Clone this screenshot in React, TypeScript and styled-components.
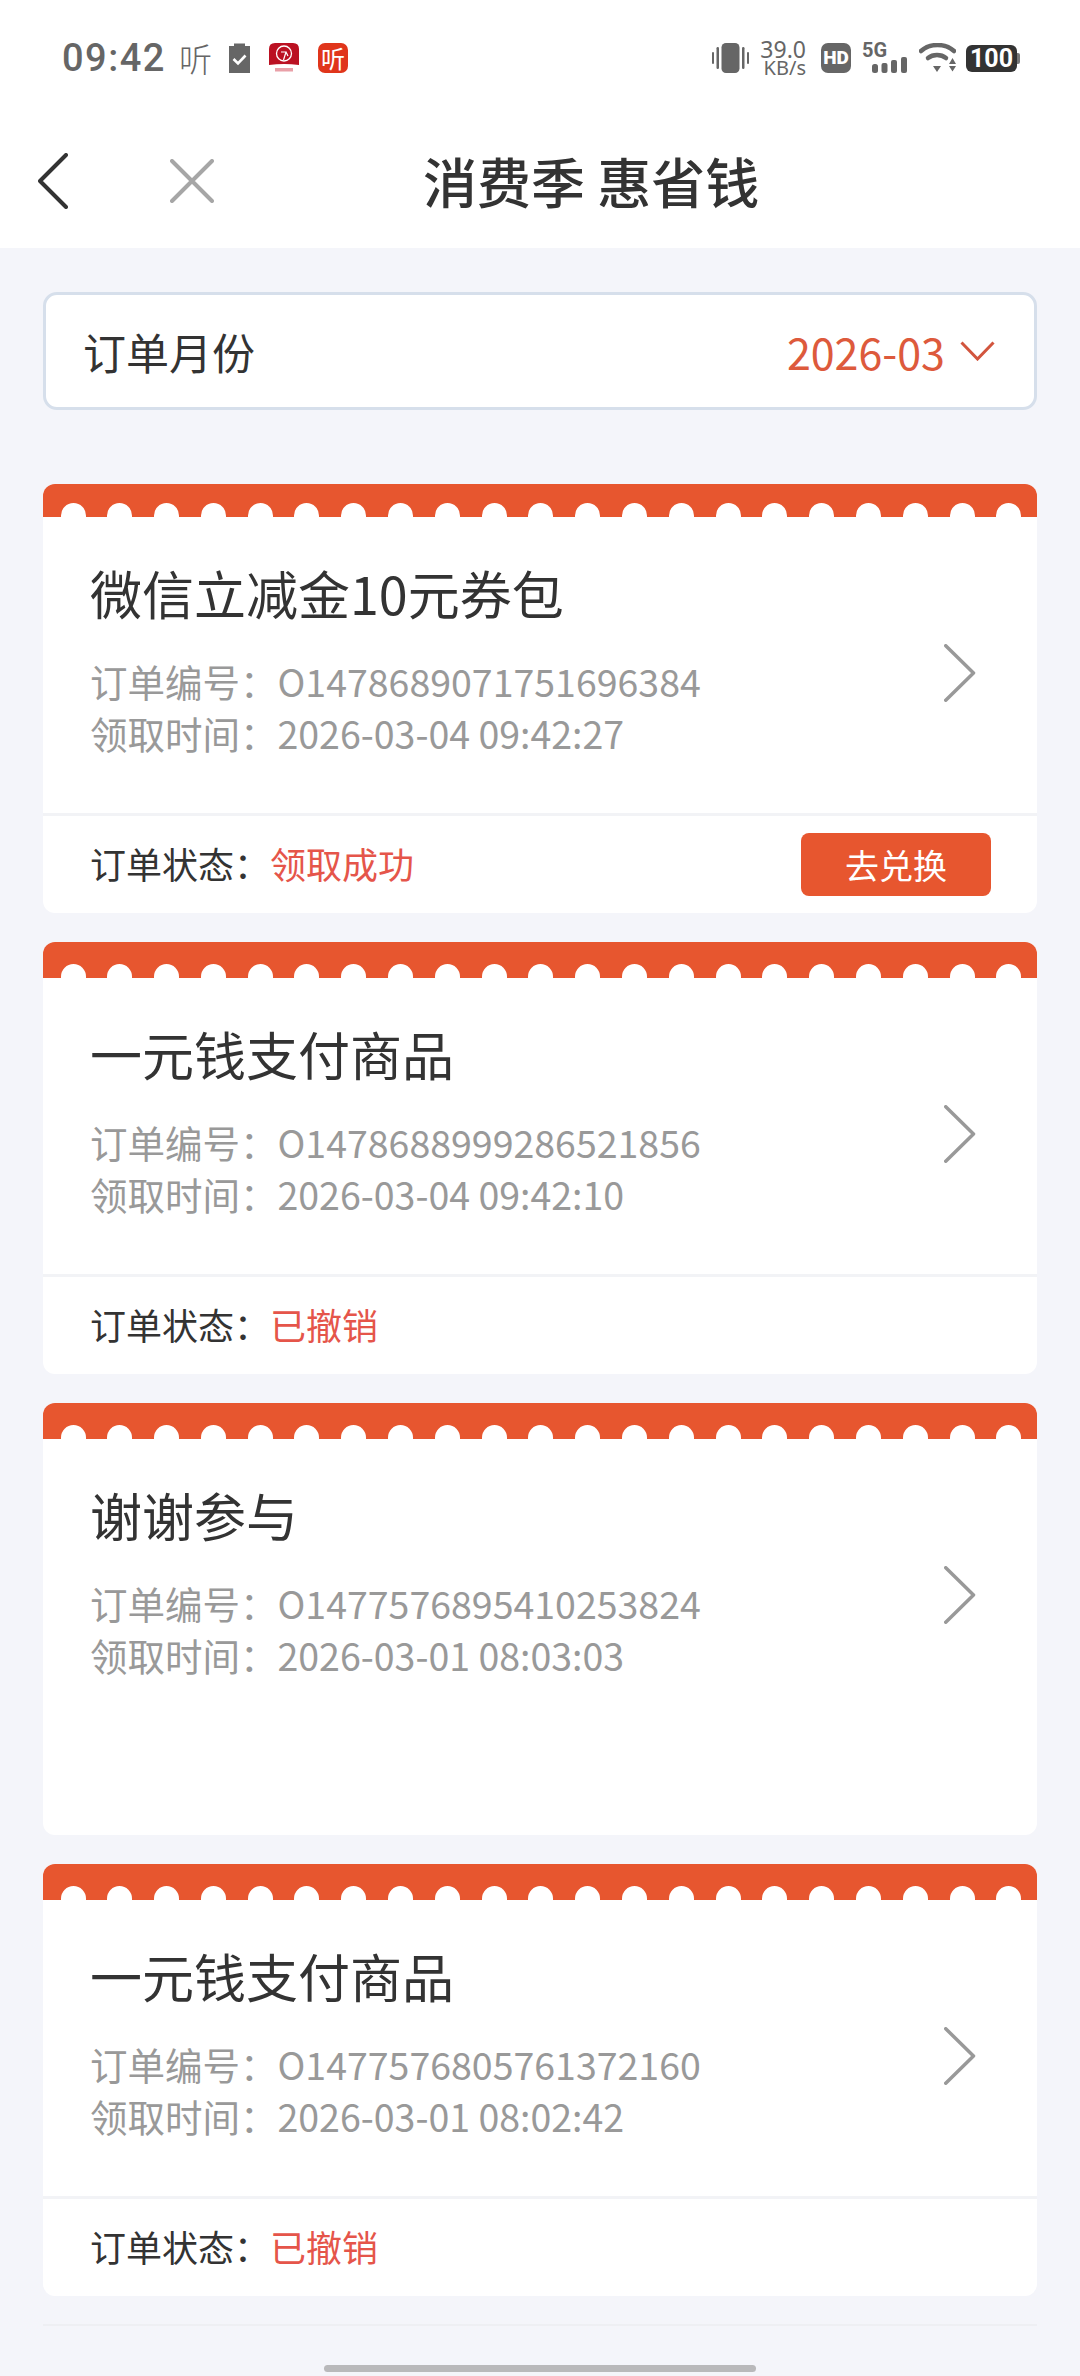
import React from 'react';
import styled, { createGlobalStyle } from 'styled-components';

const GlobalStyle = createGlobalStyle`
  html, body {
    margin: 0;
    padding: 0;
    background: #f4f5fa;
    font-family: "Noto Sans CJK SC", "Noto Sans", sans-serif;
  }
  * {
    box-sizing: border-box;
  }
`;

const Page = styled.div`
  width: 1080px;
  height: 2376px;
  overflow: hidden;
  background: #f4f5fa;
  display: flex;
  flex-direction: column;
`;

const Header = styled.header`
  background: #fff;
  height: 248px;
  flex-shrink: 0;
`;

const StatusBar = styled.div`
  height: 116px;
  padding: 0 60px 0 62px;
  display: flex;
  align-items: center;
  justify-content: space-between;
`;

const StatusGroup = styled.div<{ $gap: number }>`
  display: flex;
  align-items: center;
  gap: ${({ $gap }) => $gap}px;
`;

const Time = styled.span`
  margin-right: -6px;
  font-family: Roboto, sans-serif;
  font-size: 38px;
  font-weight: 500;
  letter-spacing: 1.5px;
  color: #666;
  line-height: 30px;
`;

const ListenGlyph = styled.span`
  margin-right: -2px;
  font-size: 33px;
  font-weight: 300;
  line-height: 30px;
  color: #666;
`;

const ListenApp = styled.span`
  width: 30px;
  height: 30px;
  border-radius: 7px;
  background: #e0351b;
  color: #fff;
  font-size: 24px;
  line-height: 30px;
  text-align: center;
`;

const Speed = styled.div`
  width: 45px;
  margin-right: 3px;
  display: flex;
  flex-direction: column;
  align-items: flex-end;
  color: #666;
  font-family: "Noto Sans", sans-serif;
`;

const SpeedValue = styled.span`
  font-size: 23px;
  line-height: 19px;
`;

const SpeedUnit = styled.span`
  font-size: 20px;
  line-height: 18px;
  white-space: nowrap;
`;

const HdBadge = styled.span`
  width: 30px;
  height: 30px;
  margin-right: -1px;
  border-radius: 7px;
  background: #666;
  color: #fff;
  font-family: Roboto, sans-serif;
  font-size: 19px;
  font-weight: 900;
  line-height: 30px;
  text-align: center;
`;

const Signal = styled.div`
  width: 45px;
  height: 30px;
  display: flex;
  flex-direction: column;
  justify-content: space-between;
`;

const SignalLabel = styled.span`
  font-family: Roboto, sans-serif;
  font-size: 20px;
  font-weight: 700;
  line-height: 15px;
  color: #666;
`;

const SignalBars = styled.svg`
  align-self: flex-end;
  margin-top: -2px;
`;

const WifiSvg = styled.svg`
  margin-right: -2px;
`;

const Battery = styled.span`
  position: relative;
  width: 51px;
  height: 27px;
  margin-right: 3px;
  border-radius: 6px;
  background: #333;
  color: #fff;
  font-family: Roboto, sans-serif;
  font-size: 25px;
  font-weight: 700;
  line-height: 27px;
  text-align: center;

  &::after {
    content: '';
    position: absolute;
    right: -3px;
    top: 8px;
    width: 3px;
    height: 11px;
    border-radius: 0 2px 2px 0;
    background: #777;
  }
`;

const NavBar = styled.nav`
  height: 132px;
  display: flex;
  align-items: center;
  padding: 0 0 2px 38px;
`;

const CloseWrap = styled.span`
  display: flex;
  margin-left: 102px;
`;

const NavTitle = styled.h1`
  margin: 0 0 0 209px;
  font-size: 54px;
  font-weight: 500;
  color: #333;
  line-height: 60px;
  white-space: nowrap;
`;

const Content = styled.main`
  padding: 44px 43px 0;
`;

const MonthSelect = styled.div`
  height: 118px;
  padding: 0 39px 0 37px;
  background: #fff;
  border: 3px solid #d6dfeb;
  border-radius: 14px;
  display: flex;
  align-items: center;
  justify-content: space-between;
  margin-bottom: 74px;
`;

const MonthLabel = styled.span`
  font-size: 43px;
  color: #333;
`;

const MonthValue = styled.span`
  display: flex;
  align-items: center;
  gap: 15px;
  font-size: 43px;
  color: #dd5a3c;
`;

const CardList = styled.div`
  display: flex;
  flex-direction: column;
  gap: 29px;
`;

const Card = styled.article`
  background: #fff;
  border-radius: 12px;
  overflow: hidden;
`;

const Band = styled.div<{ $height: number }>`
  height: ${({ $height }) => $height}px;
  background: #e7562f;
  display: flex;
  align-items: flex-end;
  gap: 21.8px;
  padding-left: 17.5px;
  overflow: hidden;
`;

const Scallop = styled.span`
  flex: 0 0 25px;
  height: 14px;
  background: #fff;
  border-radius: 12.5px 12.5px 0 0;
`;

const CardBody = styled.div`
  height: 296px;
  padding: 16px 60px 0 47px;
  display: flex;
  align-items: center;
  justify-content: space-between;
`;

const CardInfo = styled.div`
  display: flex;
  flex-direction: column;
  margin-top: -31px;
`;

const CardTitle = styled.h2`
  margin: 0 0 26px;
  font-size: 52px;
  font-weight: 400;
  color: #333;
  line-height: 72px;
`;

const MetaLine = styled.div`
  font-size: 37.5px;
  color: #999;
  line-height: 52px;
  white-space: nowrap;
`;

const CardFooter = styled.div<{ $empty?: boolean }>`
  height: 100px;
  padding: 0 46px 0 47px;
  border-top: 3px solid ${({ $empty }) => ($empty ? '#fff' : '#f2f3f6')};
  display: flex;
  align-items: center;
  justify-content: space-between;
`;

const StatusText = styled.div`
  margin-bottom: 3px;
  font-size: 36px;
  color: #333;
  line-height: 50px;
`;

const StatusValue = styled.span`
  color: #e5554a;
`;

const RedeemButton = styled.button`
  width: 190px;
  height: 63px;
  padding: 0;
  border: none;
  border-radius: 8px;
  background: #e7562f;
  color: #fff;
  font-family: inherit;
  font-size: 34px;
`;

const EndRule = styled.div`
  height: 2px;
  margin-top: 28px;
  background: #eeeff3;
`;

const HomeIndicator = styled.div`
  width: 432px;
  height: 7px;
  margin: 39px auto 0;
  border-radius: 4px;
  background: #b9b9bb;
`;

const Chevron = ({ w, h, color, sw }: { w: number; h: number; color: string; sw: number }) => (
  <svg width={w} height={h} viewBox={`0 0 ${w} ${h}`} fill="none">
    <path
      d={`M${sw / 2} ${sw / 2}L${w - sw} ${h / 2}L${sw / 2} ${h - sw / 2}`}
      stroke={color}
      strokeWidth={sw}
      strokeLinecap="round"
      strokeLinejoin="round"
    />
  </svg>
);

const VibrateIcon = () => (
  <svg width="37" height="30" viewBox="0 0 37 30" fill="#666">
    <rect x="9.500" y="0" width="18" height="30" rx="4.500" />
    <rect x="0" y="9" width="2" height="12" rx="1" />
    <rect x="4.500" y="4" width="2.500" height="22" rx="1.200" />
    <rect x="30" y="4" width="2.500" height="22" rx="1.200" />
    <rect x="35" y="9" width="2" height="12" rx="1" />
  </svg>
);

const WifiIcon = () => (
  <WifiSvg width="37" height="30" viewBox="0 0 37 30" fill="none">
    <path d="M2 8C11 0 26 0 35 8" stroke="#666" strokeWidth="4.500" strokeLinecap="round" />
    <path d="M9 15C14 11 22 11 27 15" stroke="#666" strokeWidth="4.500" strokeLinecap="round" />
    <path d="M14 23H22L18 29Z" fill="#666" />
    <path d="M30 21H37L33.500 15Z M30 23H37L33.500 28.500Z" fill="#666" />
  </WifiSvg>
);

const ClipboardIcon = () => (
  <svg width="21" height="30" viewBox="0 0 21 30">
    <path d="M0 3H5V0.500H16V3H21V30H0Z" fill="#666" />
    <path d="M4.500 16L9 20.500L16.500 12.500" fill="none" stroke="#fff" strokeWidth="2.600" />
  </svg>
);

const RedAppIcon = () => (
  <svg width="30" height="30" viewBox="0 0 30 30">
    <path d="M0 6Q0 0 6 0H24Q30 0 30 6V22Q15 20 0 22Z" fill="#bb1122" />
    <circle cx="15" cy="10.500" r="7.500" fill="none" stroke="#fff" strokeWidth="1.300" />
    <path d="M12 9H17L14.500 17M17 9L19 13" fill="none" stroke="#fff" strokeWidth="1.200" />
    <rect x="6" y="25" width="18" height="3.500" fill="#e9a0a8" />
  </svg>
);

const BackIcon = () => (
  <svg width="30" height="56" viewBox="0 0 30 56" fill="none">
    <path d="M28 2L2 28L28 54" stroke="#333" strokeWidth="4" strokeLinecap="round" strokeLinejoin="round" />
  </svg>
);

const CloseIcon = () => (
  <svg width="44" height="44" viewBox="0 0 44 44" fill="none">
    <path d="M2 2L42 42M42 2L2 42" stroke="#a6a6a6" strokeWidth="4" strokeLinecap="round" />
  </svg>
);

type Order = {
  title: string;
  orderNo: string;
  time: string;
  status?: string;
  redeem?: boolean;
  bandHeight: number;
};

const orders: Order[] = [
  { title: '微信立减金10元券包', orderNo: 'O1478689071751696384', time: '2026-03-04 09:42:27', status: '领取成功', redeem: true, bandHeight: 33 },
  { title: '一元钱支付商品', orderNo: 'O1478688999286521856', time: '2026-03-04 09:42:10', status: '已撤销', bandHeight: 36 },
  { title: '谢谢参与', orderNo: 'O1477576895410253824', time: '2026-03-01 08:03:03', bandHeight: 36 },
  { title: '一元钱支付商品', orderNo: 'O1477576805761372160', time: '2026-03-01 08:02:42', status: '已撤销', bandHeight: 36 },
];

const scallops = Array.from({ length: 21 }, (_, i) => i);

const App: React.FC = () => (
  <Page>
    <GlobalStyle />
    <Header>
      <StatusBar>
        <StatusGroup $gap={19}>
          <Time>09:42</Time>
          <ListenGlyph>听</ListenGlyph>
          <ClipboardIcon />
          <RedAppIcon />
          <ListenApp>听</ListenApp>
        </StatusGroup>
        <StatusGroup $gap={12}>
          <VibrateIcon />
          <Speed>
            <SpeedValue>39.0</SpeedValue>
            <SpeedUnit>KB/s</SpeedUnit>
          </Speed>
          <HdBadge>HD</HdBadge>
          <Signal>
            <SignalLabel>5G</SignalLabel>
            <SignalBars width="35" height="16" viewBox="0 0 35 16" fill="#666">
              <rect x="0" y="7" width="6" height="9" rx="2.500" />
              <rect x="9.500" y="6" width="6" height="10" rx="2" />
              <rect x="19" y="3" width="6" height="13" rx="2" />
              <rect x="29" y="0" width="6" height="16" rx="2" />
            </SignalBars>
          </Signal>
          <WifiIcon />
          <Battery>100</Battery>
        </StatusGroup>
      </StatusBar>
      <NavBar>
        <BackIcon />
        <CloseWrap>
          <CloseIcon />
        </CloseWrap>
        <NavTitle>消费季 惠省钱</NavTitle>
      </NavBar>
    </Header>
    <Content>
      <MonthSelect>
        <MonthLabel>订单月份</MonthLabel>
        <MonthValue>
          2026-03
          <svg width="35" height="20" viewBox="0 0 35 20" fill="none">
            <path d="M1.500 1.500L17.500 18L33.500 1.500" stroke="#d2553e" strokeWidth="3" />
          </svg>
        </MonthValue>
      </MonthSelect>
      <CardList>
        {orders.map((order) => (
          <Card key={order.orderNo}>
            <Band $height={order.bandHeight}>
              {scallops.map((i) => (
                <Scallop key={i} />
              ))}
            </Band>
            <CardBody>
              <CardInfo>
                <CardTitle>{order.title}</CardTitle>
                <MetaLine>订单编号：{order.orderNo}</MetaLine>
                <MetaLine>领取时间：{order.time}</MetaLine>
              </CardInfo>
              <Chevron w={33} h={58} color="#999" sw={3.5} />
            </CardBody>
            <CardFooter $empty={!order.status}>
              {order.status && (
                <StatusText>
                  订单状态：<StatusValue>{order.status}</StatusValue>
                </StatusText>
              )}
              {order.redeem && <RedeemButton>去兑换</RedeemButton>}
            </CardFooter>
          </Card>
        ))}
      </CardList>
      <EndRule />
    </Content>
    <HomeIndicator />
  </Page>
);

export default App;
